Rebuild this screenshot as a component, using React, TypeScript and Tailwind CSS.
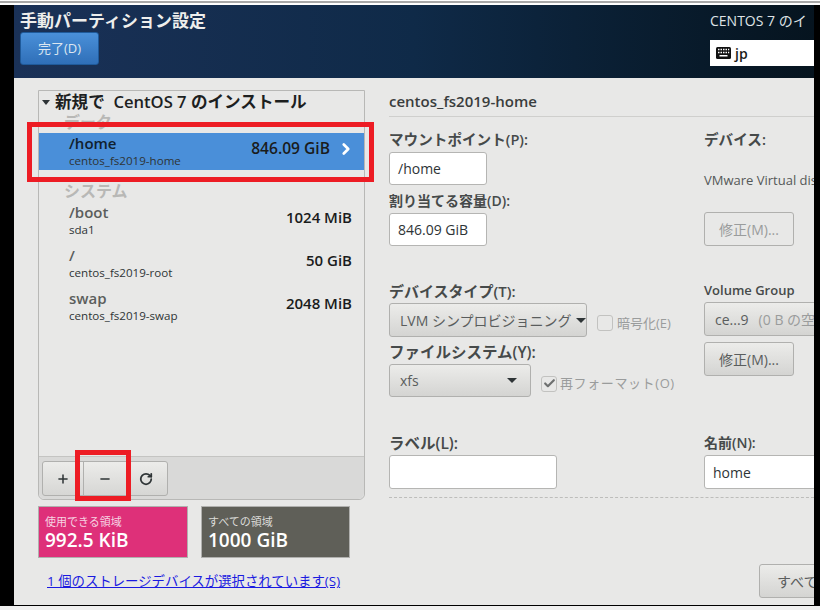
import { ChevronRight, Plus, Minus, RotateCw, Check } from 'lucide-react';

const sans = 'font-["Open_Sans","Noto_Sans_CJK_JP",sans-serif]';

const field = 'bg-white border border-[#b5b5b3] rounded-[3px] text-[14px] text-[#2e3436] flex items-center';
const btn = 'border border-[#b0b0ae] rounded-[3px] bg-gradient-to-b from-[#ececea] to-[#d4d4d2] text-[14px] flex items-center';

function Label({ children, className = '' }: { children: React.ReactNode; className?: string }) {
  return <div className={`leading-[18px] font-semibold text-[#464a4a] whitespace-nowrap ${className}`}>{children}</div>;
}

function KeyboardIcon() {
  return (
    <svg width="15" height="12" viewBox="0 0 15 12" className="shrink-0">
      <rect x="0" y="0" width="15" height="12" rx="1.5" fill="#111" />
      <path d="M2 2.5h1.5M4.5 2.5H6M7 2.5h1.5M9.5 2.5H11M12 2.5h1.2M2 5.5h1.5M4.5 5.5H6M7 5.5h1.5M9.5 5.5H11M12 5.5h1.2M3.5 8.8h8" stroke="#fff" strokeWidth="1.4" fill="none" />
    </svg>
  );
}

function MountRow({ mount, device, size, active }: { mount: string; device: string; size: string; active?: boolean }) {
  return (
    <div className={`h-[37px] pl-[30px] pr-[12px] flex items-center justify-between ${active ? 'bg-[#4a8fd9]' : ''}`}>
      <div>
        <div className={`text-[15px] leading-[18px] font-semibold ${active ? 'text-[#10202e]' : 'text-[#5b5e5c]'}`}>{mount}</div>
        <div className="text-[11.6px] leading-[18px] text-[#2e3436]">{device}</div>
      </div>
      <div className="flex items-center -mt-[6px]">
        <span className={`font-semibold text-[#1a1c1c] ${active ? 'text-[15.6px] mr-[10px]' : 'text-[15px]'}`}>{size}</span>
        {active && <ChevronRight size={18} strokeWidth={3.6} className="text-white -mx-[3px] mt-[1px]" />}
      </div>
    </div>
  );
}

export default function App() {
  return (
    <div className={`relative w-[820px] h-[610px] overflow-hidden bg-[#f0f0f0] flex flex-col ${sans}`}>
      <div className="h-[5px] bg-white shrink-0 pt-[1px]">
        <div className="h-[2px] bg-[#a8a8a8]" />
      </div>

      <div className="flex h-[601px] bg-black shrink-0 border-b border-black">
        <div className="w-[14px] shrink-0" />
        <div className="w-[800px] shrink-0 flex flex-col overflow-hidden">
          {/* header */}
          <div className="h-[73px] shrink-0 flex justify-between bg-gradient-to-r from-[#1a3157] via-[#0f2a48] to-[#06141f]">
            <div className="pl-[6px] pt-[6px]">
              <div className="text-[17px] leading-[20px] font-semibold text-[#eeeeec] whitespace-nowrap">手動パーティション設定</div>
              <div className="mt-[1px] w-[79px] h-[33px] rounded-[3px] bg-gradient-to-b from-[#4a90d9] to-[#2f6fb8] border border-[#1f5a9a] text-[#dce6f0] text-[13px] flex items-center justify-center">
                完了(D)
              </div>
            </div>
            <div className="w-[104px] pt-[6px] shrink-0 overflow-hidden">
              <div className="text-[14px] leading-[20px] text-[#dfe3e6] whitespace-nowrap">CENTOS 7 のイ</div>
              <div className="mt-[9px] h-[26px] bg-white flex items-center pl-[6px] gap-[4px] text-[14px] font-semibold text-[#1a1a1a]">
                <KeyboardIcon />
                jp
              </div>
            </div>
          </div>

          {/* body */}
          <div className="flex-1 flex bg-[#e8e8e7] overflow-hidden">
            {/* left */}
            <div className="w-[351px] shrink-0 pl-[24px] pt-[12px]">
              <div className="w-[327px] h-[410px] border border-[#b8b8b6] rounded-b-[6px] flex flex-col">
                <div className="flex-1">
                  <div className="h-[22px] pl-[3px] flex items-center gap-[5px] text-[16.6px] font-semibold text-[#1d1f1f] whitespace-nowrap">
                    <span className="w-0 h-0 border-x-[4px] border-x-transparent border-t-[5px] border-t-[#2e3436]" />
                    新規で&nbsp; CentOS 7 のインストール
                  </div>
                  <div className="h-[20px] -mt-[1px] mb-[1px] pl-[25px] text-[16px] leading-[20px] font-semibold text-[#b8b8b6]">データ</div>
                  <MountRow active mount="/home" device="centos_fs2019-home" size="846.09 GiB" />
                  <div className="h-[20px] pl-[25px] mt-[11px] text-[16px] leading-[20px] font-semibold text-[#b8b8b6]">システム</div>
                  <div className="mt-[1px]">
                    <MountRow mount="/boot" device="sda1" size="1024 MiB" />
                    <div className="h-[6px]" />
                    <MountRow mount="/" device="centos_fs2019-root" size="50 GiB" />
                    <div className="h-[6px]" />
                    <MountRow mount="swap" device="centos_fs2019-swap" size="2048 MiB" />
                  </div>
                </div>
                <div className="h-[43px] border-t border-[#c4c4c2] bg-[#d9d9d8] rounded-b-[6px] pl-[3px] pt-[4px]">
                  <div className="w-[126px] h-[35px] flex border border-[#b0b0ae] rounded-[3px] bg-gradient-to-b from-[#ececea] to-[#d6d6d4] text-[#2e3436]">
                    <div className="w-[42px] flex items-center justify-center border-r border-[#b0b0ae]"><Plus size={14} strokeWidth={2.6} /></div>
                    <div className="w-[42px] flex items-center justify-center"><Minus size={14} strokeWidth={2.6} /></div>
                    <div className="w-[42px] flex items-center justify-center"><RotateCw size={14} strokeWidth={3} /></div>
                  </div>
                </div>
              </div>
              <div className="mt-[6px] flex gap-[13px]">
                <div className="w-[150px] h-[52px] bg-[#de3079] border border-[#b0b0ae] pl-[6px] text-white">
                  <div className="text-[11px] leading-[14px] mt-[8px] text-[#f6d3e2]">使用できる領域</div>
                  <div className="text-[19px] leading-[22px] font-semibold">992.5 KiB</div>
                </div>
                <div className="w-[149px] h-[52px] bg-[#5f5f58] border border-[#b0b0ae] pl-[6px] text-white">
                  <div className="text-[11px] leading-[14px] mt-[8px] text-[#dcdcd8]">すべての領域</div>
                  <div className="text-[19px] leading-[22px] font-semibold">1000 GiB</div>
                </div>
              </div>
              <div className="mt-[14px] ml-[9px] text-[13.4px] leading-[18px] text-[#1a1ae0] underline whitespace-nowrap">1 個のストレージデバイスが選択されています(S)</div>
            </div>

            {/* right */}
            <div className="flex-1 pl-[24px] pt-[12px] min-w-0 overflow-hidden">
              <div className="h-[27px] border-b border-[#cfcfcd] text-[15px] leading-[22px] font-semibold text-[#3a3d3d]">centos_fs2019-home</div>
              <div className="flex mt-[13px] h-[359px]">
                <div className="w-[315px] shrink-0 flex flex-col">
                  <Label className="text-[14.6px]">マウントポイント(P):</Label>
                  <div className={`${field} mt-[4px] w-[98px] h-[33px] pl-[8px]`}>/home</div>
                  <Label className="mt-[7px] text-[14px]">割り当てる容量(D):</Label>
                  <div className={`${field} mt-[3px] w-[98px] h-[34px] pl-[8px]`}>846.09 GiB</div>
                  <Label className="mt-[36px] text-[15px]">デバイスタイプ(T):</Label>
                  <div className="mt-[3px] flex items-center">
                    <div className={`${btn} w-[198px] h-[34px] pl-[10px] gap-[5px] text-[12.5px] whitespace-nowrap text-[#5a5d5d]`}>
                      LVM シンプロビジョニング
                      <span className="w-0 h-0 border-x-[5px] border-x-transparent border-t-[5px] border-t-[#2e3436]" />
                    </div>
                    <div className="ml-[10px] mt-[6px] w-[16px] h-[16px] border border-[#c2c2c0] rounded-[3px] bg-[#e8e8e7]" />
                    <span className="ml-[4px] mt-[6px] text-[13px] text-[#9a9c9c]">暗号化(E)</span>
                  </div>
                  <Label className="mt-[6px] text-[15.5px]">ファイルシステム(Y):</Label>
                  <div className="mt-[3px] flex items-center">
                    <div className={`${btn} w-[142px] h-[33px] pl-[10px] pr-[13px] justify-between text-[#5a5d5d]`}>
                      xfs
                      <span className="w-0 h-0 border-x-[5px] border-x-transparent border-t-[5px] border-t-[#2e3436]" />
                    </div>
                    <div className="ml-[10px] mt-[6px] w-[16px] h-[16px] border border-[#c2c2c0] rounded-[3px] flex items-center justify-center text-[#6e7070]">
                      <Check size={13} strokeWidth={4} />
                    </div>
                    <span className="ml-[3px] mt-[6px] text-[13px] text-[#9a9c9c] tracking-[0.6px]">再フォーマット(O)</span>
                  </div>
                  <Label className="mt-[37px] text-[15.5px]">ラベル(L):</Label>
                  <div className={`${field} mt-[3px] w-[168px] h-[34px]`} />
                </div>
                <div className="flex-1 flex flex-col min-w-0">
                  <Label className="text-[14.6px]">デバイス:</Label>
                  <div className="mt-[23px] h-[18px] text-[13px] leading-[18px] text-[#555858] whitespace-nowrap">VMware Virtual disk</div>
                  <div className={`${btn} mt-[23px] w-[90px] h-[34px] justify-center text-[13px] text-[#9a9c9c] !bg-none bg-[#e8e8e7] shrink-0`}>修正(M)...</div>
                  <Label className="mt-[35px] text-[13px]">Volume Group</Label>
                  <div className={`${btn} mt-[3px] w-[120px] h-[34px] pl-[10px] whitespace-nowrap overflow-hidden text-[#5a5d5d] shrink-0`}>
                    ce...9 <span className="ml-[10px] text-[#9a9c9c]">(0 B の空き)</span>
                  </div>
                  <div className={`${btn} mt-[6px] w-[90px] h-[34px] justify-center text-[13px] text-[#5a5d5d] shrink-0`}>修正(M)...</div>
                  <Label className="mt-[58px] text-[14px]">名前(N):</Label>
                  <div className={`${field} mt-[3px] w-[120px] h-[34px] pl-[8px] text-[13px] shrink-0`}>home</div>
                </div>
              </div>
              <div className="mt-[8px] border-t border-dashed border-[#bdbdbb]" />
              <div className="mt-[66px] flex justify-end -mr-[60px]">
                <div className={`${btn} w-[115px] h-[34px] pl-[17px] text-[#5a5d5d] whitespace-nowrap overflow-hidden`}>すべて設定</div>
              </div>
            </div>
          </div>
        </div>
        <div className="flex-1 bg-black" />
      </div>

      {/* red annotation boxes */}
      <div className="absolute left-[27px] top-[122px] w-[347px] h-[60px] border-[5px] border-[#ed1c24]" />
      <div className="absolute left-[75px] top-[450px] w-[56px] h-[51px] border-[5px] border-[#ed1c24]" />
    </div>
  );
}
